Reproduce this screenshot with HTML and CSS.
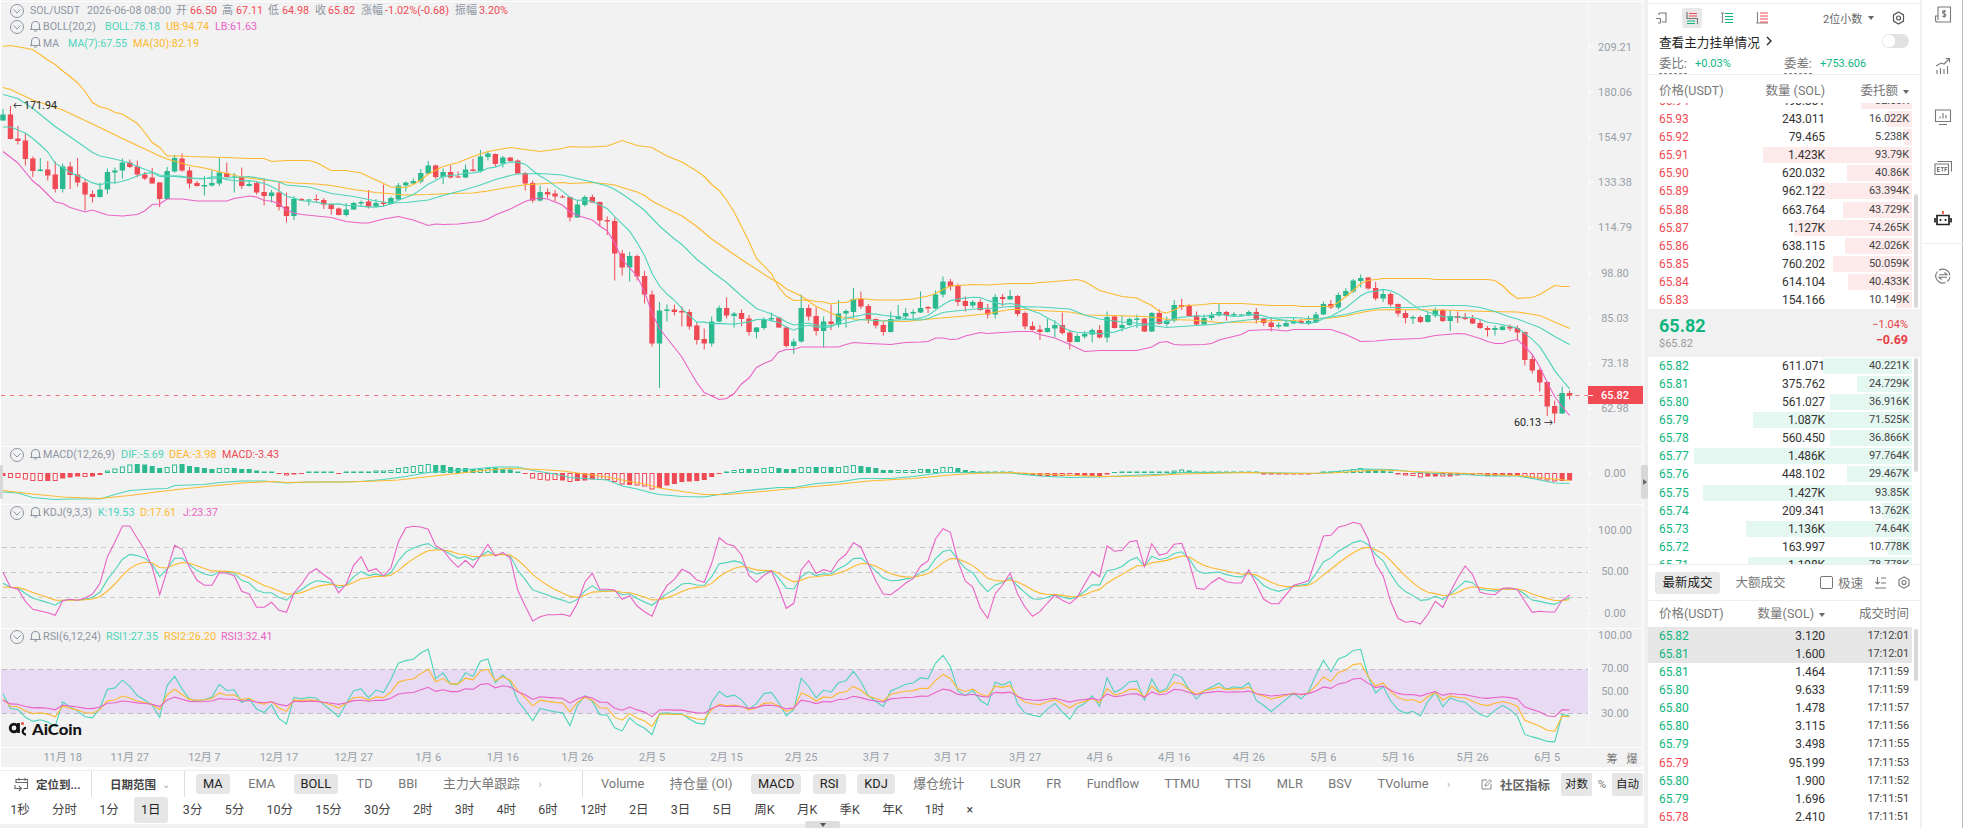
FILE: index.html
```html
<!DOCTYPE html>
<html lang="zh-CN">
<head>
    <meta charset="UTF-8">
    <meta name="viewport" content="width=device-width, initial-scale=1.0">
    <title>SOL/USDT - AiCoin</title>
    <link rel="stylesheet" href="styles.css">
</head>
<body>
    <div class="left">
        <svg id="chart" width="1644" height="767" viewBox="0 0 1644 767"></svg>
        <div class="handle handle-left"></div>
        <div class="handle handle-right"><svg width="7" height="8" viewBox="0 0 7 8"><path d="M2 1l4 3-4 3z" fill="#666"/></svg></div>

        <div class="toolbar">
            <div class="indicators">
                <div class="tool-cell locate">
                    <svg width="15" height="15" viewBox="0 0 15 15" fill="none" stroke="#666" stroke-width="1.1"><path d="M2 6V2.500h11.500v9h-4M5 .8v3M11 .8v3M2 5.500h11.500M1 8v3.500h6M5 9l2.500 2.500L5 14"/></svg>
                    <b>定位到...</b>
                </div>
                <div class="tool-cell range"><b>日期范围</b><i class="tiny">⌄</i></div>
                <div class="group main-group">
                    <span class="on">MA</span><span>EMA</span><span class="on">BOLL</span><span>TD</span><span>BBI</span><span>主力大单跟踪</span><i class="tiny">›</i>
                </div>
                <div class="group sub-group">
                    <span>Volume</span><span>持仓量 (OI)</span><span class="on">MACD</span><span class="on">RSI</span><span class="on">KDJ</span><span>爆仓统计</span><span>LSUR</span><span>FR</span><span>Fundflow</span><span>TTMU</span><span>TTSI</span><span>MLR</span><span>BSV</span><span>TVolume</span><i class="tiny">›</i>
                </div>
                <div class="right-tools">
                    <svg width="11" height="11" viewBox="0 0 11 11" fill="none" stroke="#888" stroke-width="1"><path d="M6 1H1v9h9V5M4 7l.4-2L9 .6 10.500 2 6 6.600z"/></svg>
                    <b>社区指标</b>
                    <span class="on">对数</span><span class="pct">%</span><span class="on">自动</span>
                </div>
            </div>
            <div class="periods">
                <span>1秒</span><span>分时</span><span>1分</span><span class="on">1日</span><span>3分</span><span>5分</span><span>10分</span><span>15分</span><span>30分</span><span>2时</span><span>3时</span><span>4时</span><span>6时</span><span>12时</span><span>2日</span><span>3日</span><span>5日</span><span>周K</span><span>月K</span><span>季K</span><span>年K</span><span>1时</span><span class="close">×</span>
            </div>
            <div class="fold"><svg width="8" height="6" viewBox="0 0 8 6"><path d="M1 1h6L4 5z" fill="#555"/></svg></div>
        </div>
    </div>

    <div class="book">
        <div class="book-icons">
            <svg class="expand" width="11" height="12" viewBox="0 0 11 12" fill="none" stroke="#777" stroke-width="1.1"><path d="M3 1h7v9H6M3 1v2M0 6.500h4.500M4.500 6.500V11M4.500 11H2"/></svg>
            <div class="mode active"><svg width="12" height="12" viewBox="0 0 12 12" fill="none" stroke-width="1.200"><path d="M1 0v6.500h10.500V12" stroke="#777"/><path d="M3 1.500h8M3 4h8" stroke="#f04a55"/><path d="M1 9h8M1 11.500h8" stroke="#0fb57e"/></svg></div>
            <div class="mode"><svg width="12" height="12" viewBox="0 0 12 12" fill="none" stroke-width="1.200"><path d="M0 1h3.500M1.500 1v10" stroke="#888"/><path d="M4 1.500h8M4 4.500h8M4 7.500h8M4 10.500h8" stroke="#0fb57e"/></svg></div>
            <div class="mode"><svg width="12" height="12" viewBox="0 0 12 12" fill="none" stroke-width="1.200"><path d="M1.500 0v11M0 11h12" stroke="#888"/><path d="M4 1h8M4 4h8M4 7h8M4 10h8" stroke="#f04a55"/></svg></div>
            <span class="decimals">2位小数</span><i class="caret"></i>
            <svg class="gear" width="13" height="14" viewBox="0 0 13 14" fill="none" stroke="#555" stroke-width="1.200"><path d="M6.500 1l5 2.900v6.200l-5 2.900-5-2.900V3.900z"/><circle cx="6.500" cy="7" r="2"/></svg>
        </div>
        <div class="main-force">
            <span>查看主力挂单情况</span>
            <svg width="6" height="10" viewBox="0 0 6 10" fill="none" stroke="#222" stroke-width="1.300"><path d="M1 1l4 4-4 4"/></svg>
            <div class="switch"></div>
        </div>
        <div class="ratio">
            <span class="dotted">委比:</span><em>+0.03%</em>
            <span class="dotted second">委差:</span><em>+753.606</em>
        </div>
        <div class="head"><span>价格(USDT)</span><span>数量 (SOL)</span><span>委托额<i class="caret"></i></span></div>
        <div class="asks" id="asks"></div>
        <div class="last">
            <div><div class="price">65.82</div><div class="usd">$65.82</div></div>
            <div class="change"><div>−1.04%</div><b>−0.69</b></div>
        </div>
        <div class="bids" id="bids"></div>
        <div class="trade-tabs">
            <span class="tab on">最新成交</span><span class="tab">大额成交</span>
            <i class="check"></i><span class="fast">极速</span>
            <svg width="12" height="12" viewBox="0 0 12 12" fill="none" stroke="#777" stroke-width="1.100"><path d="M2.500 0v7M.5 5l2 2 2-2M6 1h5M6 6h5M0 11h11"/></svg>
            <svg class="hex" width="12" height="13" viewBox="0 0 12 13" fill="none" stroke="#777" stroke-width="1.100"><path d="M6 .8l5 2.900v5.600l-5 2.900-5-2.900V3.700z"/><circle cx="6" cy="6.500" r="2"/></svg>
        </div>
        <div class="head trade-head"><span>价格(USDT)</span><span>数量(SOL)<i class="caret"></i></span><span>成交时间</span></div>
        <div class="trades" id="trades"></div>
        <i class="scroll scroll-asks"></i>
        <i class="scroll scroll-bids"></i>
        <i class="scroll scroll-trades"></i>
    </div>

    <div class="sidebar">
        <svg viewBox="0 0 18 18"><path d="M4 1h12.500v15H3.500A2 2 0 0 1 1.500 14V10H4zM4 10v4"/><path d="M12 5.500c-.6-1-3.600-1-3.600.8 0 2 3.600 1 3.600 3 0 1.700-3 1.700-3.700.5M10.200 3.800v8"/></svg>
        <svg viewBox="0 0 18 18"><path d="M3 17v-4M6.500 17v-6M10 17v-5M13.500 17V9M2 9l5-3 3 1 5-5M11.500 1.500H15.500V5.500"/></svg>
        <svg viewBox="0 0 18 18"><path d="M1.500 2h15v11.500h-15zM5 16.500h8M6 10.500V8.500M9 10.500V5M12 10.500V7"/></svg>
        <svg viewBox="0 0 18 18"><path d="M1 5h13.500v10.500H1zM3.500 2.500H17.500v10"/><path d="M5.800 8.500H3.500v4h2.300M3.500 10.500h2M6.800 8.500h3M8.300 8.500v4M11 12.500v-4h2.300M11 10.500h2"/></svg>
        <svg viewBox="0 0 18 18" class="robot"><path d="M3 5.500h12v9H3zM1 8v4.500M17 8v4.500"/><path d="M6.500 9v2M11.500 9v2"/><path d="M9 1v3" stroke="#f04a35"/></svg>
        <svg viewBox="0 0 18 18" class="swap"><path d="M5 3.300A7 7 0 0 1 15.800 8.500M16 10a7 7 0 0 1-2.800 4.600M11.500 15.500A7 7 0 0 1 3.500 4.500M5 7.800h8L10.500 5.500M13 10.200H5l2.500 2.300"/></svg>
    </div>

    <script src="script.js"></script>
</body>
</html>
```

FILE: styles.css
```css
* {
    box-sizing: border-box;
}
body {
    margin: 0;
    width: 1963px;
    height: 828px;
    overflow: hidden;
    display: flex;
    background-color: #f0f0f0;
    font-family: Roboto, "Noto Sans CJK SC", sans-serif;
    font-size: 12px;
    color: #333;
}
i, em {
    font-style: normal;
}
.left {
    position: relative;
    width: 1648px;
    display: flex;
    flex-direction: column;
}
#chart {
    display: block;
    background-color: #f2f2f2;
    flex: none;
}
.handle {
    position: absolute;
    top: 465px;
    width: 7px;
    height: 34px;
    background-color: #d8d8d8;
    border-radius: 2px;
    display: flex;
    align-items: center;
}
.handle-left {
    left: -4px;
}
.handle-right {
    left: 1641px;
}

/* bottom toolbar */
.toolbar {
    position: relative;
    width: 1644px;
    height: 57px;
    background-color: #fff;
}
.indicators {
    margin-top: 3px;
    border-top: 1px solid #eee;
    height: 27px;
    display: flex;
    align-items: center;
    font-size: 12.8px;
    color: #777;
}
.indicators b {
    font-weight: 700;
    font-size: 11.5px;
    color: #444;
}
.tool-cell {
    height: 26px;
    display: flex;
    align-items: center;
    border-right: 1px solid #ddd;
}
.locate {
    width: 92px;
    padding-left: 14px;
    gap: 7px;
}
.range {
    width: 93px;
    padding-left: 18px;
    gap: 6px;
}
.tiny {
    font-size: 10px;
    color: #aaa;
}
.group {
    height: 26px;
    display: flex;
    align-items: center;
    gap: 11.5px;
}
.main-group {
    width: 398px;
    padding-left: 11px;
    border-right: 1px solid #ddd;
}
.sub-group {
    padding-left: 11px;
}
.group span {
    height: 20px;
    line-height: 20px;
    padding: 0 7px;
    border-radius: 3px;
    white-space: nowrap;
}
.group span.on,
.right-tools .on {
    background-color: #e6e6e6;
    color: #222;
}
.right-tools {
    margin-left: auto;
    padding-right: 1px;
    display: flex;
    align-items: center;
}
.right-tools b {
    margin: 0 11px 0 8px;
    font-size: 12.5px;
    color: #666;
}
.right-tools .on {
    width: 31px;
    height: 23px;
    line-height: 23px;
    font-size: 11.5px;
    text-align: center;
    border-radius: 2px;
}
.right-tools .pct {
    width: 20px;
    text-align: center;
    font-size: 11.5px;
}
.periods {
    height: 26px;
    margin-left: 3px;
    display: flex;
    align-items: center;
    gap: 7.9px;
    font-size: 12.5px;
    color: #444;
}
.periods span {
    height: 26px;
    line-height: 26px;
    padding: 0 7.2px;
    border-radius: 3px;
    white-space: nowrap;
}
.periods .on {
    background-color: #e6e6e6;
    color: #222;
}
.fold {
    position: absolute;
    left: 805px;
    top: 54px;
    width: 35px;
    height: 7px;
    background-color: #ddd;
    border-radius: 2px;
    display: flex;
    align-items: center;
    justify-content: center;
}

/* order book */
.book {
    position: relative;
    width: 272px;
    background-color: #fff;
    display: flex;
    flex-direction: column;
}
.book-icons {
    height: 28px;
    margin-top: 3px;
    border-top: 1px solid #eee;
    padding-left: 8px;
    display: flex;
    align-items: center;
    flex: none;
}
.mode {
    width: 20px;
    height: 20px;
    display: flex;
    align-items: center;
    justify-content: center;
    margin-right: 15px;
}
.expand {
    margin-right: 15px;
}
.mode.active {
    background-color: #e8e8e8;
    border-radius: 3px;
}
.decimals {
    margin-left: 36px;
    font-size: 11px;
    color: #666;
}
.caret {
    display: inline-block;
    border: 3.500px solid transparent;
    border-top: 4px solid #666;
    border-bottom: 0;
    margin-left: 6px;
    vertical-align: middle;
}
.gear {
    margin-left: 18px;
}
.main-force {
    height: 20px;
    padding: 0 11px;
    display: flex;
    align-items: center;
    font-size: 12.6px;
    color: #222;
    flex: none;
}
.main-force svg {
    margin-left: 6px;
}
.switch {
    margin-left: auto;
    width: 27px;
    height: 14px;
    border-radius: 7px;
    background: radial-gradient(circle at 7px 7px, #fff 6px, #e2e2e2 6.5px);
}
.ratio {
    height: 24px;
    border-bottom: 1px solid #eee;
    padding: 4px 11px 0;
    display: flex;
    flex: none;
    color: #777;
}
.ratio span {
    width: 28px;
    line-height: 17px;
    font-size: 12.4px;
}
.dotted {
    border-bottom: 1px dashed #888;
}
.ratio em {
    width: 97px;
    margin-left: 8px;
    line-height: 18px;
    font-size: 11px;
    color: #0fb57e;
    white-space: nowrap;
}
.ratio em:last-child {
    width: 60px;
}
.ratio .second {
    margin-left: -8px;
}
.head {
    height: 28px;
    padding: 4px 11px 0;
    display: grid;
    grid-template-columns: 80px 86px 1fr;
    line-height: 24px;
    font-size: 12.5px;
    color: #777;
    flex: none;
    white-space: nowrap;
}
.head span + span {
    text-align: right;
}
.head .caret {
    margin-left: 5px;
}
.asks, .bids, .trades {
    overflow: hidden;
    display: flex;
    flex-direction: column;
    flex: none;
    width: 264px;
}
.asks {
    height: 206px;
    justify-content: flex-end;
}
.bids {
    height: 207px;
}
.trades {
    height: 201px;
}
.row {
    position: relative;
    height: 18.09px;
    line-height: 18px;
    padding: 0 3px 0 11px;
    display: grid;
    grid-template-columns: 80px 86px 1fr;
    flex: none;
}
.row span {
    position: relative;
    letter-spacing: -0.1px;
}
.row span + span {
    text-align: right;
}
.row span:last-child {
    font-size: 11px;
    color: #444;
}
.bar {
    position: absolute;
    right: 0;
    top: 1px;
    height: 16px;
}
.ask .bar {
    background-color: #fdeaeb;
}
.bid .bar {
    background-color: #e5f7f1;
}
.ask .p {
    color: #f04a55;
}
.bid .p {
    color: #0fb57e;
}
.fresh {
    background-color: #e6e6e6;
}
.last {
    height: 48px;
    background-color: #f1f1f1;
    padding: 5px 12px 0 11px;
    display: flex;
    justify-content: space-between;
    flex: none;
}
.price {
    font-size: 18px;
    line-height: 23px;
    font-weight: 700;
    color: #0fb57e;
}
.usd {
    font-size: 11px;
    line-height: 13px;
    color: #999;
}
.change {
    text-align: right;
    color: #ea4046;
    font-size: 11px;
    line-height: 15px;
    padding-top: 3px;
}
.change b {
    font-size: 12.500px;
}
.trade-tabs {
    height: 37px;
    border-top: 1px solid #eee;
    border-bottom: 1px solid #eee;
    display: flex;
    align-items: center;
    padding-left: 7px;
    flex: none;
    font-size: 12.5px;
    color: #777;
}
.tab {
    width: 65px;
    height: 22px;
    line-height: 22px;
    text-align: center;
    border-radius: 3px;
}
.tab + .tab {
    margin-left: 8px;
}
.tab.on {
    background-color: #e8e8e8;
    color: #222;
}
.check {
    width: 13px;
    height: 13px;
    border: 1px solid #777;
    border-radius: 2px;
    margin: 0 5px 0 27px;
}
.fast {
    margin-right: 12px;
}
.hex {
    margin-left: 11px;
}
.trade-head {
    height: 26px;
    padding-top: 1px;
}
.scroll {
    position: absolute;
    right: 2px;
    width: 4px;
    border-radius: 2px;
    background-color: #d8d8d8;
}
.scroll-asks {
    top: 194px;
    height: 114px;
}
.scroll-bids {
    top: 358px;
    height: 114px;
}
.scroll-trades {
    top: 629px;
    height: 52px;
}

/* icon bar */
.sidebar {
    width: 43px;
    background-color: #fff;
    border-left: 2px solid #f0f0f0;
    border-right: 1px solid #bbb;
    padding: 6px 0 0 1px;
    display: flex;
    flex-direction: column;
    align-items: center;
}
.sidebar svg {
    width: 18px;
    height: 18px;
    margin-bottom: 33px;
    flex: none;
    fill: none;
    stroke: #777;
    stroke-width: 1.1;
}
.sidebar .robot {
    stroke: #222;
    stroke-width: 1.700;
    margin-bottom: 15px;
}
.sidebar .swap {
    box-sizing: content-box;
    width: 18px;
    padding: 23px 11px 0;
    border-top: 1px solid #eee;
}

/* chart text */
.t {
    font-size: 11px;
}
.legend {
    font-size: 11.6px;
}
.logo {
    font-family: Lato, sans-serif;
    font-weight: 900;
    font-size: 15px;
}
```

FILE: script.js
```js
const GREEN = '#2bb98f', RED = '#f04a55';
const TEAL = '#4dd4ba', ORANGE = '#fdb92d', PINK = '#ea62c6';
const GREY = '#8e96a3', AXIS = '#98a0a8';

const STEP = 7.46;
const xAt = i => 3 + i * STEP;
const chart = document.getElementById('chart');
let out = '';

function line(x1, y1, x2, y2, color, dash) {
    out += `<line x1="${x1}" y1="${y1}" x2="${x2}" y2="${y2}" stroke="${color}"${dash ? ` stroke-dasharray="${dash}"` : ''}/>`;
}
function rect(x, y, w, h, fill, stroke) {
    out += `<rect x="${x}" y="${y}" width="${w}" height="${h}" fill="${fill}"${stroke ? ` stroke="${stroke}"` : ''}/>`;
}
// text with its left edge, vertical centre and width
function label(x, y, w, str, color) {
    out += `<text class="legend" x="${x}" y="${y + 4}" textLength="${w}" lengthAdjust="spacingAndGlyphs" fill="${color}">${str}</text>`;
}
function centered(x, y, str, color) {
    out += `<text class="t" x="${x}" y="${y + 3.5}" text-anchor="middle" fill="${color}">${str}</text>`;
}
function poly(points, color) {
    out += `<polyline points="${points.map(p => p[0].toFixed(1) + ',' + p[1].toFixed(1)).join(' ')}" fill="none" stroke="${color}" stroke-width="1.1"/>`;
}
// "index,y index,y ..."
function sparse(str, color) {
    poly(str.trim().split(/\s+/).map(s => {
        const p = s.split(',').map(Number);
        return [xAt(p[0]), p[1]];
    }), color);
}

// grid between panes
line(0, 1.5, 1644, 1.5, '#fff');
[446.5, 504.5, 628.5, 747.5].forEach(y => line(0, y, 1644, y, '#fdfdfd'));
line(1588.5, 0, 1588.5, 747, '#fafafa');
line(1643, 0, 1643, 768, '#fff');
line(0.5, 0, 0.5, 768, '#fff');

// candles: direction, body top, body bottom, high, low
const candles = `
g114.5,120.5,109,121 r114.5,139,106,139.5 r138.5,141,126,144.5 r140.5,159,133.5,165.5 r158.5,171,156.5,177
g169.5,171,158,171.5 r169.5,175.5,161,180.5 r174.5,189,161.5,192.5 g166.5,189,163.5,192.5 r166.5,175,162,189
r174.5,182.5,158,186.5 r182.5,194.5,179,210.5 r194,197,190.5,202.5 g189.5,197,182.5,197.5 g172,189.5,168.5,194
g170.5,172.5,167.5,183.5 g162.5,170.5,158.5,178.5 r162.5,167,159.5,168 r166.5,174.5,160.5,177 r174.5,178.5,172,180
r177.5,183.5,168,183.5 r182.5,199,182,207 g171,199,167,199.5 g158,171.5,155,172.5 r158.5,170.5,153.5,172
r170.5,183.5,167,188.5 r183,186,181,186.5 g185,186.5,176,195.5 g183,185.5,170.5,186.5 g172.5,183.5,158,186
r173,177,162.5,177.5 g176.5,177.5,173,192.5 r177,186,167.5,189 g184,186,180.5,186.5 r183,192.5,181.5,194.5
r192,196,178.5,205.5 g192.5,196,190,202.5 r192.5,207,182.5,210.5 r206.5,216,192.5,222.5 g199,216,196,220
r199,200.5,198,201 g199.5,200.5,199,205.5 r199,200,194.5,202.5 r200,204.5,198,209 r204,209,203.5,214.5
r208.5,215,207.5,215.5 g209.5,215,203,216.5 g203,209.5,202,210 g202,203.5,200.5,206.5 r201.5,206.5,190,208.5
g203,206.5,199,207.5 r202.5,204,184.5,206.5 g198,204,196.5,204.5 g185.5,199.5,183,200 g182.5,185.5,181.5,191.5
g181,183.5,178.5,184 g173,181.5,169,183.5 g165.5,173.5,161,174.5 r165.5,177,164.5,179 g172,177,168.5,184
r172,177.5,165.5,178.5 r176.5,177.5,171.5,178 g169.5,177.5,164.5,178 r169.5,171,159,171.5 g156.5,171,150,172.5
g153.5,157,151,160.5 r154,164,153.5,166.5 g157.5,163.5,156,167.5 r157.5,161,157,162.5 r160.5,173.5,159.5,174
r173,183.5,172,190.5 r183,200.5,180.5,202.5 g192,200.5,185.5,201.5 r192,194.5,188.5,198 r193.5,196.5,190,201.5
r196.5,197.5,195,198 r197,217.5,196.5,221.5 g204.5,217.5,200.5,218 g197,205,195.5,206.5 r197,202.5,194.5,203
r202,220.5,201.5,226.5 r220,221.5,216.5,235 r221,253.5,217.5,280.5 r253.5,267.5,250,275.5 g256,267.5,252,281.5
r256,276.5,254.5,280.5 r276,294.5,271,303.5 r294.5,343.5,290.5,346.5 g310.5,343.5,302,388 g309.5,311,304.5,321.5
r309.5,312,304.5,315.5 r311,312.5,306.5,326.5 r312,326.5,309.5,329.5 r325.5,340,322.5,344.5 r339,343.5,328.5,349.5
g321.5,343.5,316.5,346.5 g308,321.5,305.5,322 r308,315.5,297.5,318.5 g313.5,316,312,327.5 r313,319,309.5,326
r318.5,332,315,335.5 g327.5,332,327,338.5 g319,328,317.5,330 g318,319.5,312.5,321.5 r317.5,327.5,317,328
r327.5,346,326,347.5 g341.5,346,338.5,354 g308,341.5,294.5,342.5 r308,316.5,304.5,320.5 r316,331,307.5,335.5
g321.5,331,316.5,347.5 r321.5,324,304.5,330 g313.5,324.5,300,327.5 g311,313.5,309.5,327.5 g299,312,288,318.5
r299,306.5,291.5,309 r306,319.5,304,323.5 r319,325.5,318.5,328.5 r325,332,322,335.5 g319,332,311.5,332.5
g316,319,305,319.5 g313,316.5,308,320 g312,313.5,309.5,320 g308,312.5,291.5,313 r307,308.5,306,313
g294.5,308.5,290.5,309.5 g281.5,294.5,276.5,297.5 r281.5,286.5,279,290.5 r285.5,302,283.5,306 r301,306,296.5,311.5
g302,305.5,300,308 r302,310,299,310.5 r309.5,314.5,304,318.5 g297,314.5,294,318.5 r297,299,294,306.5
g296,299.5,290,300 r296,314,295,316.5 r313,326.5,311.5,329.5 r326,330,321.5,330.5 r329.5,332,325,340
g328,332,319,332.5 g325,328.5,320.5,337 r325,333,312.5,334.5 r332.5,342,330,349.5 g336,342,333.5,342
g334,336.5,331,338.5 g330,334.5,328.5,342.5 r330,337.5,325,338.5 g317,337.5,311.5,342.5 r316.5,328,315.5,328.5
g325,328,315.5,331.5 g319,325,317.5,326 g318.5,320,314.5,328 r318.5,331.5,318,332 g313,331.5,312,332
r313,324,309.5,324.5 g320.5,324,316.5,326.5 g305,320.5,300,322.5 r305,307,299,310 r305.5,316,304,316.5
r315.5,324.5,311.5,325.5 g318,324.5,314.5,325 g315,318,312,320.5 g312,315.5,303.5,316.5 r312,315.5,311,320.5
g314,315.5,312,317 g314.5,315.5,314,316 g312,315.5,310.5,316 r312,320,308,323.5 r319,323,317.5,326
r322.5,327,317.5,331.5 g325,326.5,322.5,328.5 g323,326.5,319.5,326.5 g321,323.5,318,324 r321,323,319,324
g321,323.5,316,325 g314.5,322.5,312,323 g304,314.5,301.5,315 r304,307.5,300,309 g295,307.5,292.5,309.5
g291,296,288,296.5 g280.5,291.5,279,293 g278,281,274.5,287.5 r277.5,288.5,277,289.5 r288,298.5,282,300.5
g294,298.5,289.5,302 r294,304.5,292.5,306.5 r304,313.5,303.5,316.5 r313,318,310.5,323.5 g317,318.5,315.5,324
r317,322,315.5,323 g315,322,312.5,322.5 g310,315.5,307.5,317.5 r310,321,309,322 g316,321,310,331
r316,318,311.5,323 r317,319,313,320 r318.5,323.5,315,324 r323,328,319.5,329 r328,330,326,336.5
g328,330,325.5,335.5 g326.5,330,325.5,330.5 r326.5,328.5,324.5,331 r328,332.5,325.5,339.5 r332,360,331.5,365.5
r359,370.5,354,373.5 r370,382.5,368.5,391.5 r382,406.5,381.5,416 r406,413.5,400.5,423 g393,413.5,386.5,414
r393,395.5,390.5,399.5`.trim().split(/\s+/).map(s => [s[0], ...s.slice(1).split(',').map(Number)]);

line(1, 395.5, 1588, 395.5, '#f07078', '4 5.1');

candles.forEach(([dir, top, bottom, high, low], i) => {
    const color = dir === 'g' ? GREEN : RED;
    rect(xAt(i) - 0.5, high, 1, low - high, color);
    rect(xAt(i) - 2.7, top, 5.4, Math.max(bottom - top, 1), color);
});
const closes = candles.map(c => c[0] === 'g' ? c[1] : c[2]);

// BOLL upper / MA30
sparse(`0,46.5 1,45.5 4,49.5 6,60 7,64.5 8,71 9,76.5 10,83 11,91.5 12,102.5 13,107 14,108.5 15,112.5 16,114 18,123.5 19,132.5 20,142.5 21,147.5 22,156 24,156
25,156.5 30,157.5 33,158.5 35,158.5 36,161.5 38,160.5 41,160.5 42,162.5 43,166.5 44,170.5 46,170.5 48,173 50,180 52,187 54,187.5 55,184.5 56,180 57,174 59,166.5
61,162.5 63,156.5 65,151.5 68,147.5 69,148.5 72,151.5 75,148.5 76,146.5 77,147 79,147 81,146 83,140.5 85,145.5 87,147.5 89,156 91,162 93,171 94,176.5 95,184.5
96,190.5 97,200 98,212 99,226.5 100,241.5 101,258.5 103,273.5 104,287.5 105,296 106,300.5 108,300 109,301.5 110,302 111,304 112,302.5 113,302.5 114,299.5
115,298.5 117,300 120,300 122,299 124,296 125,293.5 126,289.5 127,286 130,284.5 132,285 135,283.5 138,283.5 139,282.5 141,281.5 144,279.5 145,281.5 147,290.5
150,296.5 152,298 153,302 154,305.5 155,311.5 156,313 157,310 158,306 161,304.5 162,303.5 166,303.5 168,304.5 170,305.5 173,305.5 174,306.5 178,306.5 179,302.5
180,296.5 181,290.5 182,283.5 183,280.5 185,278.5 191,278.5 192,279.5 199,279.5 200,280.5 201,285.5 202,293 203,298.5 205,297.5 206,294.5 208,285.5 209,286.5 210,286.5`, ORANGE);
sparse(`0,87.5 1,89.5 4,100 8,110 12,124 16,138.5 20,152.5 21,156 22,159 25,165.5 27,168 30,173.5 32,177 35,180 39,183 42,184 44,185.5 47,189.5 50,192.5 54,195
57,194.5 60,193.5 63,193 65,191 68,187 70,184.8 75,182.5 76,183.5 79,182.5 81,184 82,185 83,187.5 85,192 86,195.5 87,201 88,205 91,216 93,226.5 95,239 98,254.5
100,264.5 103,279 104,283 105,289 107,296 109,306.5 111,313 112,316.5 114,319 117,320.5 121,321.5 125,318.5 129,316 132,313.5 135,309.5 137,309.5 139,310.5
143,312 145,315 149,315.5 153,316.5 155,318 156,319.5 159,320 161,321 163,322.5 168,322 170,320.5 173,320.5 176,319 178,318 180,316 182,312.5 184,310
186,309.5 193,310 199,311.5 203,312 206,315.5 208,322 210,328.5`, ORANGE);
// BOLL middle
sparse(`0,94.5 2,98.5 4,108.5 7,126.5 10,142 12,152.5 13,156 15,159 17,163 18,166.5 20,172 21,175 23,176.5 25,178 27,178.5 30,178 33,176.5 35,179 37,182 38,185
41,187 44,193.5 47,196.5 50,201 52,203 54,202.5 57,200 59,195.5 62,189.5 64,185 66,179.5 68,175.5 69,174 72,173.5 75,175 76,177 79,182 81,186 82,189.5 83,194
85,204.5 86,210.5 88,226 90,239 91,244.5 93,259.5 94,265 95,271.5 97,282.5 99,296 101,308.5 103,314 104,317.5 105,322 106,325 108,323 109,325 111,325.5 113,323
115,319.5 118,321 121,319.5 123,320 124,318.5 126,312.5 127,311.5 131,308.5 133,308 135,306.5 139,307 143,309 145,315 147,319 150,322 152,323 154,325.5 156,327.5
159,326 162,324.5 165,321.5 168,319 170,318 173,317.5 176,319 178,317 180,314.5 182,310.5 185,307.5 189,307.5 192,305.5 196,305.5 198,307.5 200,311.5 202,317
203,319 206,327.5 208,336.5 210,344.5`, TEAL);
// BOLL lower
sparse(`0,151.5 2,163 4,181 5,187 7,202 8,203.5 9,207.5 11,212 12,210 14,215 16,216 18,214.5 19,211 20,204.5 21,204 22,199 24,199 26,201 30,201 31,198.5 33,196
34,197 35,200.5 36,201 37,204 38,210 39,213 40,214.5 42,216 44,217.5 46,221.5 48,223 49,223 51,219 53,216.5 55,220 57,225.5 58,224 59,224.5 61,224 64,221.5 65,219
66,215 68,209 70,201.5 71,199 72,198 73,199 75,205 76,212 77,215.5 79,220 80,226 81,231 82,243 83,259.5 84,268 85,276 86,292 87,313 88,328.5 89,338 91,357 92,370
93,382.5 94,392.5 95,396 96,399.5 97,398.5 98,393.5 99,384 100,378 101,367.5 102,363.5 103,360.5 104,352 105,349.5 106,349.5 107,347 112,347 113,344.5 114,342.5
116,343.5 119,344.5 121,342.5 123,342 124,341.5 125,338 126,338 127,339.5 128,339 129,336 131,332.5 132,333.5 136,331.5 138,331.5 139,334.5 141,338 143,344.5
145,351.5 147,350.5 152,350.5 154,347 155,342.5 156,341.5 157,344.5 158,345 161,344.5 162,343.5 163,340 166,334.5 167,330.5 170,329.5 172,331 173,329.5 178,329.5
180,334.5 182,341.5 184,341 186,339.5 190,338.5 192,335.5 195,333.5 196,334 198,338.5 199,341.5 200,343.5 201,343.5 202,341 203,339.5 204,346.5 205,354.5
206,367 207,382.5 208,396.5 209,406.5 210,415.5`, PINK);
// MA7
const ma7 = [127, 127, 130, 133, 138.5, 145, 152];
for (let i = 7; i < closes.length; i++) {
    ma7[i] = closes.slice(i - 6, i + 1).reduce((a, b) => a + b) / 7;
}
poly(ma7.map((y, i) => [xAt(i), y]), TEAL);

// MACD histogram: height above (+) or below (-) zero, h = hollow
const bars = `-3 -5h -5h -6.5h -8h -8h -8 -8h -5.5 -4.5 -3.5 -4h -3.5 -2 2.5h 4.5h 6.5h 8.5h 9 8.5 7 5 6h 8.5h 9 7 6 5 4 5h 5h 5 4 4 2.5 1.5 1.5 -1 -2.5h -1.5 -1
1.5 1.5 1.5 1.5 -1 1.5 1.5 1.5 1.5 2.5h 2.5h 3h 5h 6h 7h 8h 9h 8 8 6 5 5 4 4h 5h 5.5 4 3.5 1.5 -1 -5.5h -7h -7.5h -7h -7.5 -9h -8 -7.5 -6.5 -7h -7h -9h -11.5h -12 -12.5h -13.5h -16.5h
-15 -12.5 -11 -9 -8.5 -8 -7 -4 -1 1.5 3h 4h 4 4h 5h 6h 5 4 4 6h 6h 6 6h 6 6h 7h 8h 7 6 5 3 3 3h 3h 3h 4h 4 4h 6h 6h 5 3 2 1.5 1.5 1.5 1.5 1.5 -1 -2 -2h -3 -3h -3 -3h -3h -3 -3 -3 -3 -1.5 1
1.5 1.5 1.5 1.5 1.5 1.5 1.5 2.5h 3.5h 2.5 1.5 1.5 1.5 1.5 1.5 1.5 1.5 1.5 1.5 -1.5 -1.5 -1.5 -1.5 -1.5 -1.5 -1.5 -1 1.5 1.5 2 3h 4h 5h 3.5 3 2.5 1.5 -1.5 -2.5h -3h -4.5h -3.5 -3.5 -3.5h -3.5
-2.5 -2 -2 -3h -3 -3 -2.5 -2.5 -2.5 -4h -5.5h -6.5h -7.5h -8.5h -8 -7.5`.trim().split(/\s+/);
bars.forEach((s, i) => {
    const v = parseFloat(s), color = v > 0 ? GREEN : RED, h = Math.abs(v);
    const y = v > 0 ? 473 - v : 473;
    if (s.endsWith('h')) rect(xAt(i) - 2, y + 0.5, 4, Math.max(h - 1, 1), '#f6f6f6', color);
    else rect(xAt(i) - 2.5, y, 5, h, color);
});
sparse(`0,492 2,493 4,497.5 7,499.5 9,499 13,499 15,494.5 17,490.5 20,489 22,488.5 23,485.5 27,484.5 29,482.5 32,481 35,481 38,483 41,482 44,482 48,481.5 51,479.5
54,476.5 57,472.5 60,471 63,469 66,467 69,467 71,470.5 74,474 76,477.5 79,479 81,480 82,483 83,486 85,489 87,493 88,494.5 91,496.5 94,497 96,494.5 99,491 104,487.5
106,487.5 109,483.5 112,482 115,478.5 119,478.5 122,476.5 124,474.5 126,472.5 130,472.5 135,473 139,476 143,477.5 147,477 151,475.5 156,474 158,472.5 167,472.5
176,473.5 180,470.5 182,469 186,469.5 190,472.5 193,474 196,474.5 199,476 203,476 205,478.5 207,481.5 208,483 210,483.5`, TEAL);
sparse(`0,490.5 4,494 8,497 13,498.5 17,495.5 20,492.5 24,489 28,486 32,483 36,481.5 38,482.5 42,482 46,482 50,481 53,480 56,477.5 59,475 62,472.5 65,470 68,468.5
72,469.5 75,471 78,474 81,477 84,481.5 86,484 88,488 91,491.5 94,494.5 97,494.5 101,492 108,487 111,485 116,481 122,478.5 127,475 130,473.5 135,472.5 139,474
144,475.5 147,476.5 153,476 158,474 167,472.5 173,473.5 178,473 182,471 185,470 189,471.5 193,472.5 198,474 203,475.5 207,478.5 210,480.5`, ORANGE);

// KDJ
[547.5, 572.5, 597.5].forEach(y => line(2, y, 1588, y, '#c9c9c9', '5 4'));
const j = `427 472 478 514 538 543 548 556 512 508 511 504 492 460 380 336 288 288 325 360 412 494 422 346 358 412 451 466 466 428 430 437 484 492 532 532 517 541 547
489 463 430 416 434 450 488 463 406 380 424 416 438 414 335 293 289 291 298 347 360 390 412 391 412 378 343 378 367 385 480 528 573 560 554 554 553 559 520 456 430
478 478 480 508 497 528 545 559 505 467 448 418 428 450 457 400 323 341 348 375 437 457 436 422 475 535 520 420 392 430 419 425 391 373 338 351 402 453 492 494 478
459 446 408 393 327 296 307 394 453 471 533 565 491 465 429 492 531 559 545 519 495 511 521 502 462 424 440 348 364 361 335 332 410 341 376 370 343 340 396 475 478
458 443 455 459 459 420 463 508 521 521 494 466 460 452 385 318 316 292 286 277 283 328 401 437 514 565 577 574 582 553 514 532 486 444 408 434 487 492 494 475 473
479 514 547 544 546 546 511 495`.trim().split(/\s+/).map(Number);
const k = [460], d = [472];
for (let i = 1; i < j.length; i++) {
    k[i] = (3 * j[i] + 4 * d[i - 1]) / 7;
    d[i] = (2 * d[i - 1] + k[i]) / 3;
}
[[k, TEAL], [d, ORANGE], [j, PINK]].forEach(([s, c]) => poly(s.map((v, i) => [xAt(i), 430 + v / 3]), c));

// RSI
rect(1, 669.5, 1587, 44, '#e8daf3');
line(2, 669.5, 1588, 669.5, '#c0bcc4', '5 4');
line(2, 713.5, 1588, 713.5, '#c0bcc4', '5 4');
function rsi(n, start) {
    const price = closes.map(y => Math.exp((628 - y) / 301.3));
    let up = start / 100 * price[0] * 0.04, all = price[0] * 0.04;
    return price.map((p, i) => {
        if (i) {
            const diff = p - price[i - 1];
            up = (up * (n - 1) + Math.max(diff, 0)) / n;
            all = (all * (n - 1) + Math.abs(diff)) / n;
        }
        return [xAt(i), 746.5 - up / all * 110];
    });
}
poly(rsi(6, 48), TEAL);
poly(rsi(12, 43), ORANGE);
poly(rsi(24, 42), PINK);

// legends
function fold(y) {
    out += `<g fill="none" stroke="${GREY}"><circle cx="17" cy="${y + 1}" r="6.5"/><path d="M13.500 ${y - 0.5}l3.500 3.500 3.500-3.500"/></g>`;
}
function bell(y) {
    out += `<path d="M30 ${y + 3.500}h11M31.500 ${y + 3.500}v-4a4 4 0 0 1 8 0v4M34 ${y + 5}h3" fill="none" stroke="${GREY}" stroke-width="1.100"/>`;
}
fold(10); fold(26); fold(454); fold(512); fold(636);
bell(26); bell(42); bell(454); bell(512); bell(636);
[
    [30, 10, 50, 'SOL/USDT', GREY], [87, 10, 84, '2026-06-08 08:00', GREY],
    [176, 10, 11, '开', GREY], [190, 10, 27, '66.50', RED],
    [222, 10, 11, '高', GREY], [236, 10, 27, '67.11', RED],
    [268, 10, 11, '低', GREY], [282, 10, 27, '64.98', RED],
    [315, 10, 11, '收', GREY], [328, 10, 27, '65.82', RED],
    [361, 10, 22, '涨幅', GREY], [385, 10, 64, '-1.02%(-0.68)', RED],
    [455, 10, 22, '振幅', GREY], [479, 10, 29, '3.20%', RED],
    [43, 26, 53, 'BOLL(20,2)', GREY], [105, 26, 55, 'BOLL:78.18', TEAL], [166, 26, 43, 'UB:94.74', ORANGE], [215, 26, 42, 'LB:61.63', PINK],
    [43, 42.5, 16, 'MA', GREY], [68, 42.5, 59, 'MA(7):67.55', TEAL], [133, 42.5, 66, 'MA(30):82.19', ORANGE],
    [43, 454, 72, 'MACD(12,26,9)', GREY], [121, 454, 43, 'DIF:-5.69', TEAL], [169, 454, 47.5, 'DEA:-3.98', ORANGE], [222, 454, 57, 'MACD:-3.43', RED],
    [43, 512, 49, 'KDJ(9,3,3)', GREY], [98, 512, 36.5, 'K:19.53', TEAL], [140, 512, 36, 'D:17.61', ORANGE], [183, 512, 35, 'J:23.37', PINK],
    [43, 636, 58, 'RSI(6,12,24)', GREY], [106, 636, 52, 'RSI1:27.35', TEAL], [164, 636, 52, 'RSI2:26.20', ORANGE], [221, 636, 51.5, 'RSI3:32.41', PINK],
    [13, 106, 9, '←', '#222'], [24, 105, 33, '171.94', '#222'],
    [1514, 421.500, 27, '60.13', '#222'], [1544, 422.500, 9, '→', '#222']
].forEach(a => label(...a));

// price axis
['209.21', '180.06', '154.97', '133.38', '114.79', '98.80', '85.03', '73.18', '62.98'].forEach((s, n) => {
    const y = 47 + n * 45.2;
    line(1588, y, 1593, y, '#fff');
    centered(1615, y, s, AXIS);
});
[[473, '0.00'], [530, '100.00'], [571.500, '50.00'], [613, '0.00'], [635, '100.00'], [668.500, '70.00'], [691, '50.00'], [713, '30.00']].forEach(([y, s]) => {
    line(1588, y, 1593, y, '#fff');
    centered(1615, y, s, AXIS);
});
rect(1588, 386, 55, 18, RED);
line(1588, 395.5, 1593, 395.5, '#fff');
out += '<text class="t" x="1615" y="399" text-anchor="middle" fill="#fff" font-weight="500">65.82</text>';

// dates
['11月 18', '11月 27', '12月 7', '12月 17', '12月 27', '1月 6', '1月 16', '1月 26', '2月 5', '2月 15', '2月 25', '3月 7', '3月 17', '3月 27',
 '4月 6', '4月 16', '4月 26', '5月 6', '5月 16', '5月 26', '6月 5'].forEach((s, n) => centered(xAt(n ? 7 + n * 10 : 8), 757, s, AXIS));
centered(1612, 759, '筹', '#777');
centered(1632, 759, '爆', '#777');

// logo
out += `<g fill="none" stroke="#151515" stroke-width="2.800"><circle cx="14" cy="728" r="3.800"/><path d="M18.500 723v10"/><path d="M26 728a3.200 3.200 0 1 0 0 6.500" stroke-width="2.300"/></g>
<circle cx="22.500" cy="723.500" r="1.500" fill="#f04a35"/>
<text class="logo" x="32" y="735" textLength="50" lengthAdjust="spacingAndGlyphs" fill="#151515">AiCoin</text>`;

chart.innerHTML = out;

// order book
function row(cls, cells, bar) {
    return `<div class="row ${cls}">${bar ? `<i class="bar" style="width:${bar}px"></i>` : ''}<span class="p">${cells[0]}</span><span>${cells[1]}</span><span>${cells[2]}</span></div>`;
}
const asks = [
    ['65.94', '493.331', '32.53K', 51.5], ['65.93', '243.011', '16.022K', 25], ['65.92', '79.465', '5.238K', 8],
    ['65.91', '1.423K', '93.79K', 149], ['65.90', '620.032', '40.86K', 65], ['65.89', '962.122', '63.394K', 100.5],
    ['65.88', '663.764', '43.729K', 69], ['65.87', '1.127K', '74.265K', 118], ['65.86', '638.115', '42.026K', 67],
    ['65.85', '760.202', '50.059K', 79.5], ['65.84', '614.104', '40.433K', 64], ['65.83', '154.166', '10.149K', 16]
];
const bids = [
    ['65.82', '611.071', '40.221K', 89.5], ['65.81', '375.762', '24.729K', 55], ['65.80', '561.027', '36.916K', 82],
    ['65.79', '1.087K', '71.525K', 159], ['65.78', '560.450', '36.866K', 82], ['65.77', '1.486K', '97.764K', 218],
    ['65.76', '448.102', '29.467K', 65.5], ['65.75', '1.427K', '93.85K', 209.5], ['65.74', '209.341', '13.762K', 30.5],
    ['65.73', '1.136K', '74.64K', 166.5], ['65.72', '163.997', '10.778K', 24], ['65.71', '1.198K', '78.778K', 164.5]
];
const trades = [
    ['65.82', '3.120', '17:12:01', 'bid fresh'], ['65.81', '1.600', '17:12:01', 'bid fresh'], ['65.81', '1.464', '17:11:59', 'bid'],
    ['65.80', '9.633', '17:11:59', 'bid'], ['65.80', '1.478', '17:11:57', 'bid'], ['65.80', '3.115', '17:11:56', 'bid'],
    ['65.79', '3.498', '17:11:55', 'bid'], ['65.79', '95.199', '17:11:53', 'ask'], ['65.80', '1.900', '17:11:52', 'bid'],
    ['65.79', '1.696', '17:11:51', 'bid'], ['65.78', '2.410', '17:11:51', 'ask']
];
document.getElementById('asks').innerHTML = asks.map(r => row('ask', r, r[3])).join('');
document.getElementById('bids').innerHTML = bids.map(r => row('bid', r, r[3])).join('');
document.getElementById('trades').innerHTML = trades.map(r => row(r[3], r)).join('');
```
